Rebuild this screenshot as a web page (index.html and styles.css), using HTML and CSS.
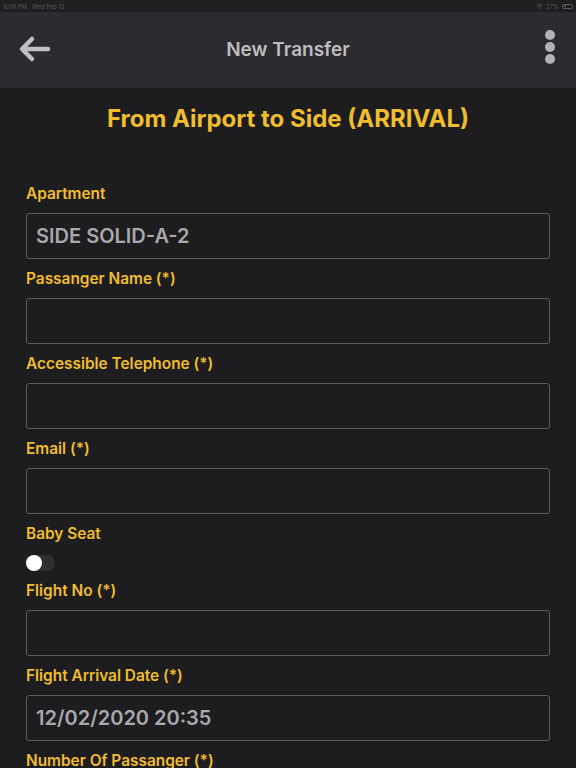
FILE: index.html
```html
<!DOCTYPE html>
<html>
<head>
<meta charset="utf-8">
<link rel="stylesheet" href="styles.css">
</head>
<body>
<div class="status">
  <span class="st-left">9:08 PM&nbsp;&nbsp; Wed Feb 12</span>
  <span class="st-right">
    <svg width="7" height="5" viewBox="0 0 7 5"><path d="M0.5 1.8 A4 4 0 0 1 6.5 1.8 M1.6 2.9 A2.5 2.5 0 0 1 5.4 2.9" stroke="#5a5a5c" stroke-width="0.8" fill="none"/><circle cx="3.5" cy="4.2" r="0.6" fill="#5a5a5c"/></svg>
    <span>27%</span>
    <span class="batt"><span class="batt-fill"></span></span>
  </span>
</div>
<header class="appbar">
  <svg class="back" width="34" height="32" viewBox="0 0 34 32">
    <path d="M31 16 H6 M15 6 L5 16 L15 26" stroke="#bfbfc1" stroke-width="4.5" fill="none" stroke-linecap="round" stroke-linejoin="round"/>
  </svg>
  <div class="appbar-title">New Transfer</div>
  <div class="kebab"><span></span><span></span><span></span></div>
</header>
<main class="content">
  <h1 class="heading">From Airport to Side (ARRIVAL)</h1>
  <form class="form">
    <div class="field">
      <label class="label">Apartment</label>
      <div class="input">SIDE SOLID-A-2</div>
    </div>
    <div class="field">
      <label class="label">Passanger Name (*)</label>
      <div class="input"></div>
    </div>
    <div class="field">
      <label class="label">Accessible Telephone (*)</label>
      <div class="input"></div>
    </div>
    <div class="field">
      <label class="label">Email (*)</label>
      <div class="input"></div>
    </div>
    <div class="field">
      <label class="label">Baby Seat</label>
      <div class="toggle"><span class="knob"></span></div>
    </div>
    <div class="field">
      <label class="label">Flight No (*)</label>
      <div class="input"></div>
    </div>
    <div class="field">
      <label class="label">Flight Arrival Date (*)</label>
      <div class="input">12/02/2020 20:35</div>
    </div>
    <div class="field">
      <label class="label">Number Of Passanger (*)</label>
      <div class="input"></div>
    </div>
  </form>
</main>
</body>
</html>
```
FILE: styles.css
```css
html, body {
  margin: 0;
  padding: 0;
  background: #1d1c1f;
  font-family: Inter, "Liberation Sans", sans-serif;
  overflow: hidden;
}
.status {
  height: 12px;
  background: #1f1e21;
  display: flex;
  justify-content: space-between;
  align-items: center;
  padding: 0 3px;
  font-size: 6px;
  color: #5a5a5c;
}
.st-right {
  display: flex;
  align-items: center;
  gap: 3px;
}
.batt {
  width: 11px;
  height: 5px;
  border: 0.8px solid #5a5a5c;
  border-radius: 1.5px;
  box-sizing: border-box;
  display: flex;
  padding: 0.6px;
}
.batt-fill {
  width: 30%;
  background: #5a5a5c;
}
.appbar {
  height: 76px;
  background: #2c2b2f;
  display: grid;
  grid-template-columns: 1fr auto 1fr;
  align-items: center;
  padding: 0 19px;
  box-sizing: border-box;
}
.back {
  display: block;
  margin-top: -2px;
  margin-left: -2px;
}
.appbar-title {
  font-size: 19px;
  font-weight: 600;
  color: #bdbdbf;
  margin-top: -1px;
}
.kebab {
  justify-self: end;
  display: flex;
  flex-direction: column;
  gap: 1.7px;
  width: 10px;
  margin-top: -6px;
  margin-right: 2px;
}
.kebab span {
  width: 10px;
  height: 10px;
  border-radius: 50%;
  background: #b3b3b5;
}
.content {
  padding: 0 26px 0 26px;
}
.heading {
  margin: 0;
  padding-top: 17px;
  text-align: center;
  font-size: 24px;
  font-weight: 700;
  color: #f0bd2f;
  line-height: 28px;
  height: 28px;
}
.form {
  display: flex;
  flex-direction: column;
  margin-top: 51px;
}
.field {
  display: flex;
  flex-direction: column;
}
.label {
  font-size: 15.4px;
  font-weight: 600;
  color: #f0bd2f;
  line-height: 20px;
  height: 20px;
  margin-bottom: 9px;
}
.input {
  height: 46px;
  border: 1.5px solid #5b5a5e;
  border-radius: 3px;
  box-sizing: border-box;
  display: flex;
  align-items: center;
  padding: 0 9px;
  font-size: 20px;
  font-weight: 600;
  color: #a9a8ac;
  margin-bottom: 10px;
}
.toggle {
  width: 29px;
  height: 16px;
  border-radius: 8px;
  background: #303033;
  position: relative;
  margin-top: 2px;
  margin-bottom: 10px;
}
.knob {
  position: absolute;
  left: 0;
  top: 0;
  width: 16px;
  height: 16px;
  border-radius: 50%;
  background: #ffffff;
}
```
